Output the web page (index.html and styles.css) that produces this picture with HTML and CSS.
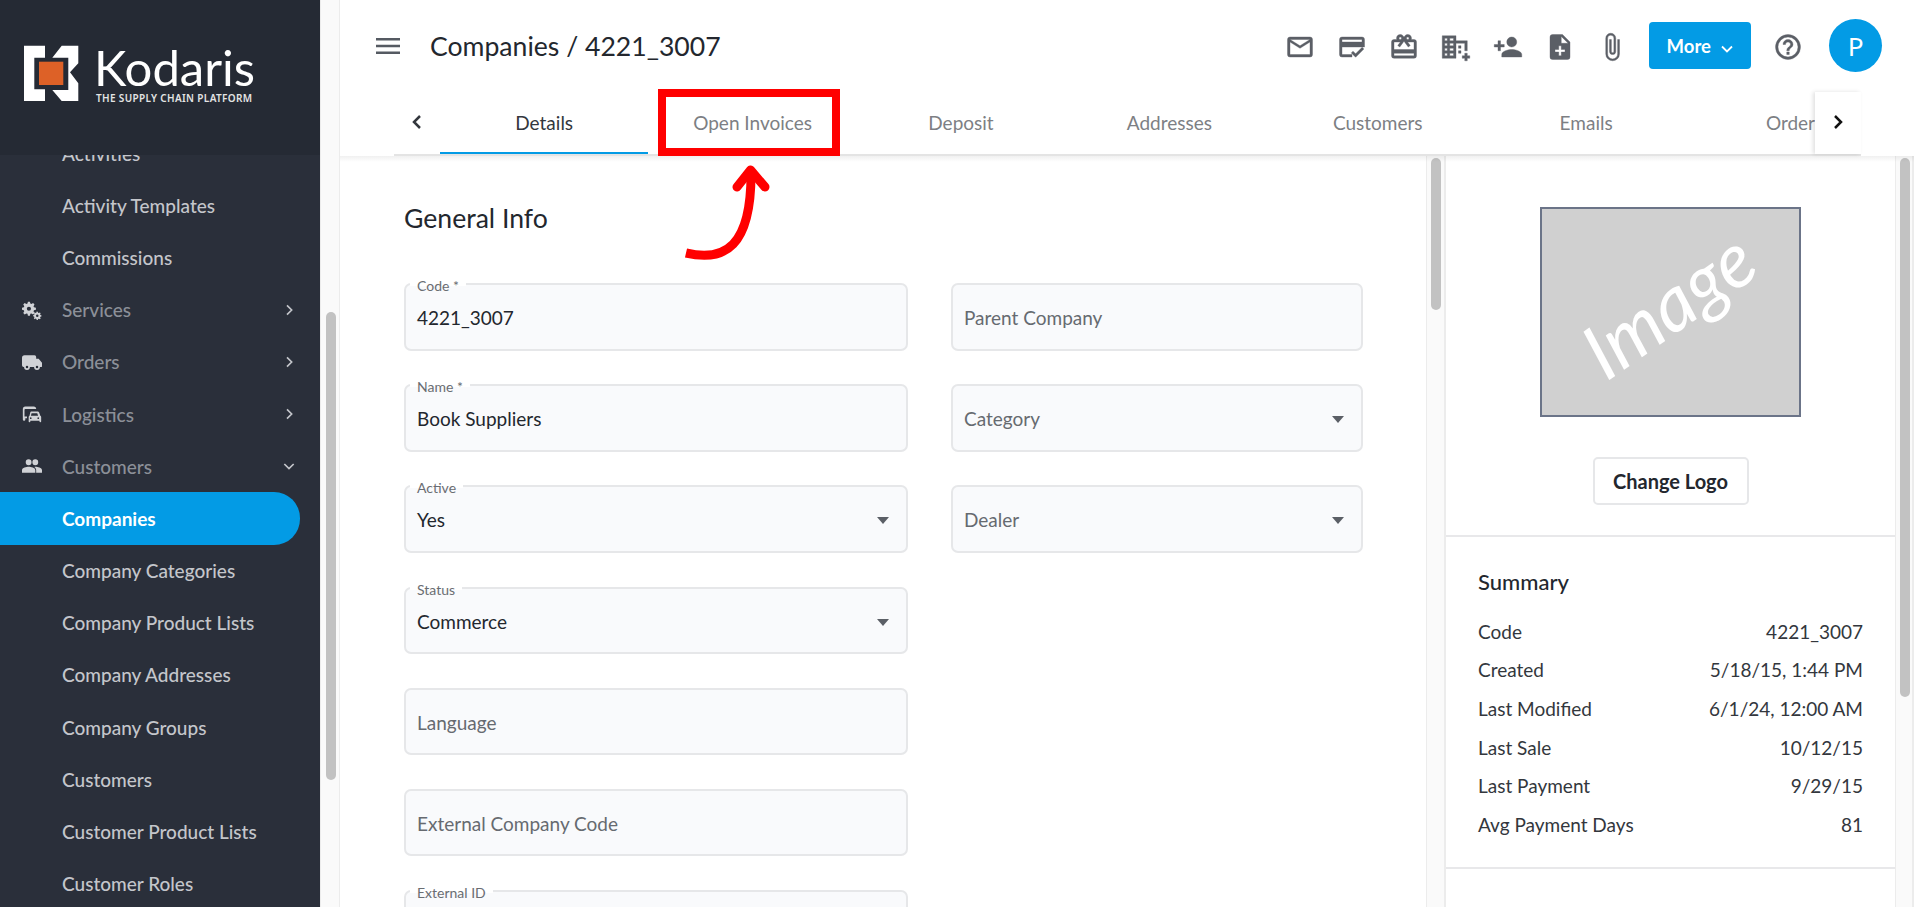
FILE: index.html
```html
<!DOCTYPE html>
<html lang="en">
<head>
    <meta charset="UTF-8">
    <title>Companies / 4221_3007 - Kodaris</title>
    <link rel="stylesheet" href="styles.css">
</head>
<body>
<div class="app">
    <aside class="sidebar">
        <div class="brand">
            <svg class="brand-mark" width="58" height="58" viewBox="0 0 58 58">
                <path fill="#fff" d="M1 1.700H22V13.700H11.300V45.300H22V57H1Z"/>
                <path fill="#fff" d="M29.300 13.700L38.700 1.700H55.300V19.300L47 28.300L55.300 39.300V57H38.700L29.300 46H45.300V13.700Z"/>
                <rect x="16" y="17.700" width="24.300" height="23.300" fill="#dd6127"/>
            </svg>
            <div class="brand-text">
                <div class="brand-name">Kodaris</div>
                <div class="brand-sub">THE SUPPLY CHAIN PLATFORM</div>
            </div>
        </div>
        <div class="nav-wrap">
            <nav class="nav">
                <a class="nav-item sub clipped">Activities</a>
                <a class="nav-item sub">Activity Templates</a>
                <a class="nav-item sub">Commissions</a>
                <a class="nav-item section">
                    <svg class="nav-icon" viewBox="0 0 24 24"><path fill-rule="evenodd" d="M9.500 2l.5 2.300 1.300.6 2-1.200 1.700 1.700-1.200 2 .6 1.400 2.300.5v2.400l-2.300.5-.6 1.400 1.200 2-1.700 1.700-2-1.200-1.300.5-.5 2.400H7.100l-.5-2.400-1.400-.5-2 1.200-1.700-1.700 1.200-2-.5-1.400L0 11.700V9.300l2.200-.5.5-1.400-1.200-2 1.700-1.700 2 1.200 1.400-.6L7.100 2zM8.300 8a2.500 2.500 0 100 5 2.500 2.500 0 000-5zM19 14l.3 1.300 1 .4 1.100-.7 1 1-.7 1.100.4 1 1.200.3v1.400l-1.200.3-.4 1 .7 1.100-1 1-1.100-.7-1 .4L19 24h-1.400l-.3-1.300-1-.4-1.100.7-1-1 .7-1.100-.4-1-1.200-.3v-1.400l1.200-.3.4-1-.7-1.100 1-1 1.100.7 1-.4.3-1.300zM18.300 17.500a1.500 1.500 0 100 3 1.500 1.500 0 000-3z"/></svg>
                    <span>Services</span>
                    <svg class="nav-chev" viewBox="0 0 24 24"><path d="M9 5l7 7-7 7"/></svg>
                </a>
                <a class="nav-item section">
                    <svg class="nav-icon" viewBox="0 0 24 24"><path fill-rule="evenodd" d="M3 4h12a2 2 0 012 2v2h3l4 5v4a1 1 0 01-1 1h-1.500a3.500 3.500 0 01-7 0H9.500a3.500 3.500 0 01-7 0H2a2 2 0 01-2-2V7a3 3 0 013-3zM6 16.500a1.500 1.500 0 100 3 1.500 1.500 0 000-3zm12 0a1.500 1.500 0 100 3 1.500 1.500 0 000-3z"/></svg>
                    <span>Orders</span>
                    <svg class="nav-chev" viewBox="0 0 24 24"><path d="M9 5l7 7-7 7"/></svg>
                </a>
                <a class="nav-item section">
                    <svg class="nav-icon" viewBox="0 0 24 24"><path d="M4 3h10a3 3 0 013 3H4a1 1 0 00-1 1v8h3v2H4v1.500a1.500 1.500 0 01-3 0V6a3 3 0 013-3z"/><path fill-rule="evenodd" d="M11 9h8a1.500 1.500 0 011.400 1l1.600 4a2 2 0 011 1.700V21a1 1 0 01-2 0v-1H10v1a1 1 0 01-2 0v-5.300A2 2 0 019 14l1-4a1.500 1.500 0 011-1zm.5 2l-.8 3h8.600l-1-3zM10.500 16a1 1 0 100 2 1 1 0 000-2zm9 0a1 1 0 100 2 1 1 0 000-2z"/></svg>
                    <span>Logistics</span>
                    <svg class="nav-chev" viewBox="0 0 24 24"><path d="M9 5l7 7-7 7"/></svg>
                </a>
                <a class="nav-item section">
                    <svg class="nav-icon" viewBox="0 0 24 24"><path d="M16 11a3.500 3.500 0 10-.1-7 3.500 3.500 0 00.1 7zm-8 0a3.500 3.500 0 10-.1-7 3.500 3.500 0 00.1 7zm0 2c-2.700 0-8 1.300-8 4v3h16v-3c0-2.700-5.300-4-8-4zm8 0c-.3 0-.7 0-1.100.1 1.300.9 2.100 2.200 2.100 3.900v3h7v-3c0-2.700-5.300-4-8-4z"/></svg>
                    <span>Customers</span>
                    <svg class="nav-chev" viewBox="0 0 24 24"><path d="M5 9l7 7 7-7"/></svg>
                </a>
                <a class="nav-item sub active">Companies</a>
                <a class="nav-item sub">Company Categories</a>
                <a class="nav-item sub">Company Product Lists</a>
                <a class="nav-item sub">Company Addresses</a>
                <a class="nav-item sub">Company Groups</a>
                <a class="nav-item sub">Customers</a>
                <a class="nav-item sub">Customer Product Lists</a>
                <a class="nav-item sub">Customer Roles</a>
            </nav>
        </div>
    </aside>
    <div class="nav-scroll"><div class="nav-thumb"></div></div>

    <main class="main">
        <header class="topbar">
            <svg class="menu-icon" width="24" height="16" viewBox="0 0 24 16"><path d="M0 0h24v2.500H0zM0 6.700h24v2.500H0zM0 13.400h24v2.500H0z"/></svg>
            <h1 class="page-title">Companies / 4221_3007</h1>
            <div class="toolbar">
                <svg class="tool" viewBox="0 0 24 24"><path d="M20 4H4a2 2 0 00-2 2v12a2 2 0 002 2h16a2 2 0 002-2V6a2 2 0 00-2-2zm0 14H4V8l8 5 8-5v10zm-8-7L4 6h16l-8 5z"/></svg>
                <svg class="tool" viewBox="0 0 24 24"><path d="M20 4H4a2 2 0 00-2 2v12a2 2 0 002 2h8v-2H4v-6h18V6a2 2 0 00-2-2zm0 4H4V6h16v2zm-5.100 12.200l-3.500-3.500 1.400-1.400 2.100 2.100 5.200-5.200 1.400 1.400-6.600 6.600z"/></svg>
                <svg class="tool" viewBox="0 0 24 24"><path d="M20 6h-2.200c.1-.3.200-.7.200-1 0-1.700-1.300-3-3-3-1 0-1.900.5-2.500 1.300L12 4l-.5-.7C10.900 2.500 10 2 9 2 7.300 2 6 3.300 6 5c0 .3.100.7.200 1H4a2 2 0 00-2 2v11a2 2 0 002 2h16a2 2 0 002-2V8a2 2 0 00-2-2zm-5-2a1 1 0 110 2 1 1 0 010-2zM9 4a1 1 0 110 2 1 1 0 010-2zm11 15H4v-2h16v2zm0-5H4V8h5.100L7 10.800 8.600 12 11 8.700l1-1.400 1 1.400 2.400 3.300 1.600-1.200L14.900 8H20v6z"/></svg>
                <svg class="tool" viewBox="0 0 24 24"><path fill-rule="evenodd" d="M1 3h11v4h9v8h-2V9h-7v12H1V3zm2 2v2h2V5zm0 4v2h2V9zm0 4v2h2v-2zm0 4v2h2v-2zm4-12v2h3V5zm0 4v2h3V9zm0 4v2h3v-2zm0 4v2h3v-2zm7-6h2v2h-2zm0 4h2v2h-2zm5 2h2v2h2v2h-2v2h-2v-2h-2v-2h2z"/></svg>
                <svg class="tool" viewBox="0 0 24 24"><path d="M15 12a4 4 0 100-8 4 4 0 000 8zm-9-2V7H4v3H1v2h3v3h2v-3h3v-2H6zm9 4c-2.700 0-8 1.300-8 4v2h16v-2c0-2.700-5.300-4-8-4z"/></svg>
                <svg class="tool" viewBox="0 0 24 24"><path d="M14 2H6a2 2 0 00-2 2v16a2 2 0 002 2h12a2 2 0 002-2V8l-6-6zm2 14h-3v3h-2v-3H8v-2h3v-3h2v3h3v2zm-3-7V3.500L18.500 9H13z"/></svg>
                <svg class="tool" viewBox="0 0 24 24"><path d="M16.500 6v11.500a4 4 0 01-8 0V5a2.500 2.500 0 015 0v10.500a1 1 0 01-2 0V6H10v9.500a2.500 2.500 0 005 0V5a4 4 0 00-8 0v12.500a5.500 5.500 0 0011 0V6h-1.500z"/></svg>
                <button class="more-btn">More <svg width="12" height="8" viewBox="0 0 12 8"><path d="M1 1.500l5 5 5-5"/></svg></button>
                <svg class="tool help" viewBox="0 0 24 24"><path d="M11 18h2v-2h-2v2zm1-16a10 10 0 100 20 10 10 0 000-20zm0 18a8 8 0 110-16 8 8 0 010 16zm0-14a4 4 0 00-4 4h2a2 2 0 014 0c0 2-3 1.750-3 5h2c0-2.250 3-2.500 3-5a4 4 0 00-4-4z"/></svg>
                <div class="avatar">P</div>
            </div>
        </header>

        <div class="tabbar">
            <button class="tab-arrow"><svg width="12" height="16" viewBox="0 0 12 16"><path d="M9 2L3 8l6 6"/></svg></button>
            <div class="tabs">
                <a class="tab active">Details</a>
                <a class="tab">Open Invoices</a>
                <a class="tab">Deposit</a>
                <a class="tab">Addresses</a>
                <a class="tab">Customers</a>
                <a class="tab">Emails</a>
                <a class="tab">Orders</a>
            </div>
            <button class="tab-arrow next"><svg width="12" height="16" viewBox="0 0 12 16"><path d="M3 2l6 6-6 6"/></svg></button>
        </div>

        <div class="content">
            <section class="form-pane">
                <h2 class="section-title">General Info</h2>
                <div class="form-grid">
                    <div class="field"><label>Code *</label><span class="value">4221_3007</span></div>
                    <div class="field"><span class="holder">Parent Company</span></div>
                    <div class="field"><label>Name *</label><span class="value">Book Suppliers</span></div>
                    <div class="field select"><span class="holder">Category</span></div>
                    <div class="field select"><label>Active</label><span class="value">Yes</span></div>
                    <div class="field select"><span class="holder">Dealer</span></div>
                    <div class="field select"><label>Status</label><span class="value">Commerce</span></div>
                    <div></div>
                    <div class="field"><span class="holder">Language</span></div>
                    <div></div>
                    <div class="field"><span class="holder">External Company Code</span></div>
                    <div></div>
                    <div class="field"><label>External ID</label></div>
                </div>
            </section>
            <div class="pane-scroll"><div class="pane-thumb"></div></div>
            <aside class="info-pane">
                <div class="logo-block">
                    <div class="image-box"><span>Image</span></div>
                    <button class="logo-btn">Change Logo</button>
                </div>
                <div class="summary">
                    <h3>Summary</h3>
                    <dl>
                        <div><dt>Code</dt><dd>4221_3007</dd></div>
                        <div><dt>Created</dt><dd>5/18/15, 1:44 PM</dd></div>
                        <div><dt>Last Modified</dt><dd>6/1/24, 12:00 AM</dd></div>
                        <div><dt>Last Sale</dt><dd>10/12/15</dd></div>
                        <div><dt>Last Payment</dt><dd>9/29/15</dd></div>
                        <div><dt>Avg Payment Days</dt><dd>81</dd></div>
                    </dl>
                </div>
            </aside>
            <div class="pane-scroll right"><div class="pane-thumb tall"></div></div>
        </div>
    </main>
</div>

<!-- annotation drawn over the tab bar -->
<div class="callout-box"></div>
<svg class="callout-arrow" width="100" height="100" viewBox="0 0 100 100">
    <path class="shaft" d="M2 93C40 102 68 88 67 10"/>
    <path d="M53 27L66.500 10 81 27"/>
</svg>
</body>
</html>
```
FILE: styles.css
```css
* {
    margin: 0;
    padding: 0;
    box-sizing: border-box;
}
html, body {
    height: 100%;
    overflow: hidden;
}
body {
    font-family: "Lato", "Noto Sans", sans-serif;
    color: #23272e;
    background-color: #fff;
}
.app {
    display: flex;
    height: 907px;
}

/* sidebar */
.sidebar {
    width: 320px;
    flex-shrink: 0;
    background-color: #2a2f3a;
    display: flex;
    flex-direction: column;
    overflow: hidden;
}
.brand {
    height: 155px;
    flex-shrink: 0;
    background-color: #252a34;
    display: flex;
    gap: 15px;
    padding: 44px 0 0 23px;
}
.brand-mark {
    flex-shrink: 0;
}
.brand-name {
    font-size: 49px;
    line-height: 46px;
    height: 48px;
    font-weight: 400;
    color: #fff;
    margin-left: -2px;
}
.brand-sub {
    font-family: "Noto Sans", sans-serif;
    font-size: 10px;
    line-height: 12px;
    font-weight: 600;
    letter-spacing: 0.35px;
    color: #e4e4e4;
    white-space: nowrap;
}
.nav-wrap {
    flex: 1;
    overflow: hidden;
}
.nav {
    margin-top: -28px;
    display: flex;
    flex-direction: column;
}
.nav-item {
    height: 52.2px;
    display: flex;
    align-items: center;
    font-size: 19px;
    font-weight: 500;
    padding-left: 62px;
    white-space: nowrap;
    flex-shrink: 0;
}
.nav-item.sub {
    color: #c4c6cb;
}
.nav-item.section {
    color: #8c9098;
    padding-left: 22px;
}
.nav-item.active {
    width: 300px;
    color: #fff;
    font-weight: 700;
    background-color: #039be5;
    border-radius: 0 26px 26px 0;
}
.nav-icon {
    width: 20px;
    height: 20px;
    fill: #d0d2d6;
    margin-right: 20px;
    flex-shrink: 0;
}
.nav-chev {
    width: 16px;
    height: 16px;
    fill: none;
    stroke: #c4c6cb;
    stroke-width: 2.5;
    margin-left: auto;
    margin-right: 23px;
}
.nav-scroll {
    width: 20px;
    flex-shrink: 0;
    background-color: #fafafa;
    border-left: 1px solid #ececec;
    border-right: 1px solid #ececec;
    padding: 312px 0 0 5px;
}
.nav-thumb {
    width: 10px;
    height: 468px;
    background-color: #c2c2c2;
    border-radius: 5px;
}

/* top bar */
.main {
    flex: 1;
    min-width: 0;
    display: flex;
    flex-direction: column;
}
.topbar {
    height: 92px;
    flex-shrink: 0;
    display: flex;
    align-items: center;
    padding-left: 36px;
}
.menu-icon {
    fill: #555a62;
    flex-shrink: 0;
}
.page-title {
    font-size: 26.6px;
    font-weight: 400;
    margin-left: 30px;
    white-space: nowrap;
}
.toolbar {
    margin-left: auto;
    margin-top: -1px;
    display: flex;
    align-items: center;
    margin-right: 32px;
}
.tool {
    width: 30px;
    height: 30px;
    fill: #5b5f66;
    stroke: #5b5f66;
    stroke-width: 0.3;
    margin: 3px 22px 0 0;
    flex-shrink: 0;
}
.tool.help {
    margin: 3px 26px 0 22px;
}
.more-btn {
    width: 102px;
    height: 47px;
    background-color: #039be5;
    color: #fff;
    border: none;
    border-radius: 4px;
    font-family: inherit;
    font-size: 18.5px;
    font-weight: 700;
    flex-shrink: 0;
}
.more-btn svg {
    fill: none;
    stroke: #fff;
    stroke-width: 1.8;
    margin-left: 6px;
}
.avatar {
    width: 53px;
    height: 53px;
    flex-shrink: 0;
    border-radius: 50%;
    background-color: #039be5;
    color: #fff;
    font-size: 25px;
    display: flex;
    align-items: center;
    justify-content: center;
}

/* tabs */
.tabbar {
    height: 64px;
    flex-shrink: 0;
    margin: 0 53px 0 54px;
    border-bottom: 2px solid #e4e4e4;
    display: flex;
    position: relative;
    z-index: 2;
}
.tabbar::after {
    content: '';
    position: absolute;
    left: -54px;
    right: -53px;
    bottom: -8px;
    height: 6px;
    background: linear-gradient(rgba(0,0,0,0.06), rgba(0,0,0,0));
}
.tab-arrow {
    width: 46px;
    flex-shrink: 0;
    background: #fff;
    border: none;
}
.tab-arrow svg {
    fill: none;
    stroke: #33373d;
    stroke-width: 2.5;
}
.tab-arrow.next {
    box-shadow: -2px 0 4px rgba(0,0,0,0.12);
    z-index: 1;
}
.tab-arrow.next svg {
    stroke: #111;
}
.tabs {
    flex: 1;
    min-width: 0;
    display: flex;
    overflow: hidden;
}
.tab {
    flex: 0 0 208.4px;
    display: flex;
    align-items: center;
    justify-content: center;
    font-size: 19px;
    color: #7d7f84;
    white-space: nowrap;
    border-bottom: 3px solid transparent;
    height: 63px;
}
.tab.active {
    color: #33373d;
    border-bottom-color: #039be5;
}

/* content panes */
.content {
    flex: 1;
    min-height: 0;
    display: flex;
}
.form-pane {
    flex: 1;
    min-width: 0;
    padding: 44px 64px 0;
    overflow: hidden;
}
.section-title {
    font-size: 26.6px;
    font-weight: 400;
    line-height: 36px;
    margin-bottom: 47px;
}
.form-grid {
    display: grid;
    grid-template-columns: 504px 412px;
    grid-auto-rows: 67.5px;
    column-gap: 43px;
    row-gap: 33.7px;
}
.field {
    position: relative;
    background-color: #f9fafc;
    border: 2px solid #e6e7e9;
    border-radius: 7px;
    padding: 21px 11px 0;
    font-size: 19px;
    line-height: 24px;
}
.field label {
    position: absolute;
    top: -7px;
    left: 4px;
    padding: 0 7px;
    font-size: 14px;
    line-height: 16px;
    color: #6a6d72;
    background: linear-gradient(#fff 50%, #f9fafc 50%);
}
.value {
    color: #23272e;
}
.holder {
    color: #666a70;
}
.field.select::after {
    content: '';
    position: absolute;
    right: 17px;
    top: 30px;
    border-left: 6px solid transparent;
    border-right: 6px solid transparent;
    border-top: 7px solid #5b5f66;
}
.pane-scroll {
    width: 20px;
    flex-shrink: 0;
    background-color: #fafafa;
    border-left: 1px solid #ececec;
    border-right: 2px solid #ececec;
    padding: 2px 0 0 4px;
}
.pane-thumb {
    width: 10px;
    height: 152px;
    background-color: #c2c2c2;
    border-radius: 5px;
}
.pane-thumb.tall {
    height: 539px;
}
.pane-scroll.right {
    width: 19px;
}
.info-pane {
    width: 449px;
    flex-shrink: 0;
}
.logo-block {
    height: 381px;
    border-bottom: 2px solid #e8e8ea;
    display: flex;
    flex-direction: column;
    align-items: center;
    padding-top: 51px;
}
.image-box {
    width: 261px;
    height: 210px;
    background-color: #d0d0d0;
    border: 2px solid #6b7488;
    display: flex;
    align-items: center;
    justify-content: center;
    overflow: hidden;
}
.image-box span {
    font-size: 76px;
    font-style: italic;
    color: #fff;
    transform: rotate(-35deg);
    margin: 0 6px 18px 0;
}
.logo-btn {
    margin-top: 40px;
    width: 156px;
    height: 48px;
    background-color: #fff;
    border: 2px solid #e6e7e9;
    border-radius: 5px;
    font-family: inherit;
    font-size: 20px;
    font-weight: 700;
    color: #23272e;
}
.summary {
    height: 332px;
    border-bottom: 2px solid #e8e8ea;
    padding: 31px 32px 0;
}
.summary h3 {
    font-size: 22px;
    font-weight: 500;
    line-height: 28px;
    margin-bottom: 16px;
}
.summary dl div {
    display: flex;
    justify-content: space-between;
    height: 38.6px;
    align-items: center;
    font-size: 19px;
    color: #33373d;
}

/* red annotation */
.callout-box {
    position: absolute;
    left: 658px;
    top: 89px;
    width: 182px;
    height: 67px;
    border: 8px solid #ff0000;
    z-index: 5;
}
.callout-arrow {
    position: absolute;
    left: 684px;
    top: 160px;
    z-index: 5;
    fill: none;
    stroke: #ff0000;
    stroke-width: 9;
    stroke-linecap: round;
    stroke-linejoin: round;
}
.callout-arrow .shaft {
    stroke-linecap: butt;
}
```
